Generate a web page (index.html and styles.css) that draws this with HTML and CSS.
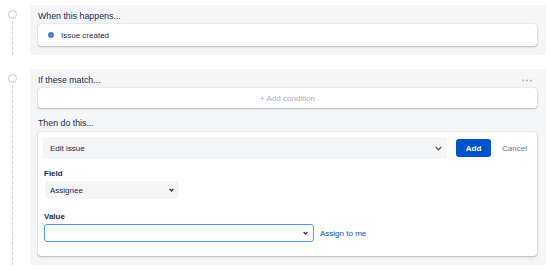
FILE: index.html
```html
<!DOCTYPE html>
<html lang="en">
<head>
  <meta charset="UTF-8" />
  <title>Rule editor</title>
  <link rel="stylesheet" href="styles.css">
</head>
<body>
  <div class="flow">
    <div class="step first">
      <div class="rail"><span class="node"></span><span class="line"></span></div>
      <section class="panel">
        <div class="panel-head"><h2>When this happens...</h2></div>
        <div class="card trigger"><span class="dot"></span>Issue created</div>
      </section>
    </div>

    <div class="step">
      <div class="rail"><span class="node"></span><span class="line"></span></div>
      <section class="panel">
        <div class="panel-head">
          <h2>If these match...</h2>
          <svg class="more" width="10" height="3" viewBox="0 0 10 3"><circle cx="1.2" cy="1.5" r="1.1"/><circle cx="5" cy="1.5" r="1.1"/><circle cx="8.8" cy="1.5" r="1.1"/></svg>
        </div>
        <div class="card add-condition">+ Add condition</div>

        <div class="panel-head then"><h2>Then do this...</h2></div>
        <div class="card action">
          <div class="action-row">
            <div class="select wide">
              <span>Edit issue</span>
              <svg class="chev" width="7" height="5" viewBox="0 0 7 5"><polyline points="0.8,1 3.5,3.8 6.2,1"/></svg>
            </div>
            <button class="btn-primary">Add</button>
            <button class="btn-link">Cancel</button>
          </div>

          <div class="field-label">Field</div>
          <div class="select small">
            <span>Assignee</span>
            <svg class="chev mini" width="5" height="4" viewBox="0 0 5 4"><polyline points="0.6,1 2.5,3 4.4,1"/></svg>
          </div>

          <div class="field-label value">Value</div>
          <div class="value-row">
            <div class="select input">
              <span></span>
              <svg class="chev mini" width="5" height="4" viewBox="0 0 5 4"><polyline points="0.6,1 2.5,3 4.4,1"/></svg>
            </div>
            <a class="link" href="#">Assign to me</a>
          </div>
        </div>
      </section>
    </div>
  </div>
</body>
</html>
```

FILE: styles.css
```css
body {
  margin: 0;
  padding-top: 5px;
  background-color: #ffffff;
  font-family: 'Liberation Sans', Arial, sans-serif;
  font-size: 8px;
  color: #172b4d;
}
.flow {
  display: flex;
  flex-direction: column;
}
.step {
  display: flex;
  padding-bottom: 6px;
}
.step.first {
  padding-bottom: 14px;
}
.rail {
  width: 24px;
  margin-right: 6px;
  display: flex;
  flex-direction: column;
  align-items: center;
}
.node {
  width: 7px;
  height: 7px;
  margin-top: 5px;
  border: 1px solid #c1c7d0;
  border-radius: 50%;
  background-color: #ffffff;
}
.line {
  flex: 1;
  margin-top: 2px;
  border-left: 1px dashed #d0d4db;
}
.panel {
  flex: 1;
  margin-right: 4px;
  padding: 3px 9px 9px 8px;
  background-color: #f4f5f7;
  border-radius: 3px;
}
.panel-head {
  display: flex;
  justify-content: space-between;
  align-items: center;
}
.panel-head h2 {
  margin: 0;
  font-size: 8.8px;
  font-weight: normal;
  line-height: 16px;
  color: #172b4d;
}
.panel-head.then {
  margin-top: 7px;
  margin-bottom: 1px;
}
.more {
  margin-right: 5px;
  fill: #b3bac5;
}
.card {
  background-color: #ffffff;
  border-radius: 3px;
  box-shadow: 0 1px 2px rgba(9, 30, 66, 0.25), 0 0 1px rgba(9, 30, 66, 0.31);
}
.trigger {
  height: 22px;
  display: flex;
  align-items: center;
  padding-left: 10px;
}
.dot {
  width: 6px;
  height: 6px;
  margin-right: 7px;
  border-radius: 50%;
  background-color: #4a7fe0;
}
.add-condition {
  height: 20px;
  display: flex;
  align-items: center;
  justify-content: center;
  color: #a5adba;
}
.action {
  padding: 5px 10px 14px 5px;
}
.action-row {
  display: flex;
  align-items: center;
}
.select {
  display: flex;
  align-items: center;
  justify-content: space-between;
  box-sizing: border-box;
  background-color: #f4f5f7;
  border-radius: 3px;
}
.select.wide {
  flex: 1;
  height: 22px;
  padding: 0 5px 0 7px;
}
.chev {
  fill: none;
  stroke: #42526e;
  stroke-width: 1.2;
}
.chev.mini {
  stroke: #253858;
  stroke-width: 1.3;
}
button {
  font-family: inherit;
  font-size: 8px;
  border: none;
  cursor: pointer;
}
.btn-primary {
  margin-left: 9px;
  width: 35px;
  height: 18px;
  padding: 0;
  font-weight: bold;
  color: #ffffff;
  background-color: #0052cc;
  border-radius: 3px;
}
.btn-link {
  margin-left: 11px;
  padding: 0;
  background: none;
  color: #6b778c;
}
.field-label {
  margin: 8px 0 1px 1px;
  font-weight: bold;
  line-height: 13px;
}
.field-label.value {
  margin-top: 11px;
}
.select.small {
  width: 134px;
  height: 18px;
  margin-left: 2px;
  padding: 0 5px;
}
.value-row {
  display: flex;
  align-items: center;
}
.select.input {
  width: 270px;
  height: 18px;
  margin-left: 1px;
  padding: 0 5px;
  background-color: #ffffff;
  border: 1px solid #4c9aff;
}
.link {
  margin-left: 6px;
  color: #0052cc;
  text-decoration: none;
}
```
